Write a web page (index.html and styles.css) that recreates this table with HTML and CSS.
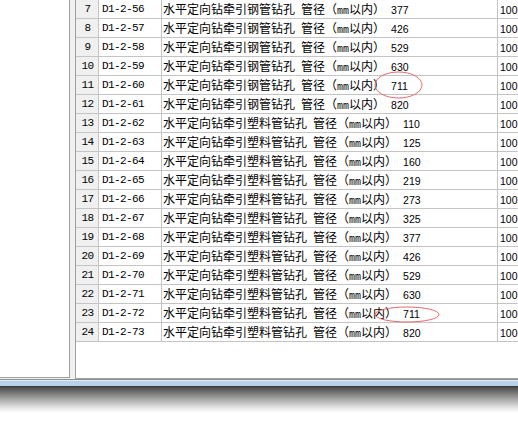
FILE: index.html
```html
<!DOCTYPE html>
<html lang="zh-CN">
<head>
<meta charset="utf-8">
<link rel="stylesheet" href="styles.css">
</head>
<body>
<div class="main">
  <div class="side"></div>
  <div class="gridpanel">
    <div class="grid">
      <div class="row"><div class="c num">7</div><div class="c code">D1-2-56</div><div class="c desc">水平定向钻牵引钢管钻孔<span class="a"> </span>管径（<span class="a">mm</span>以内）<span class="a"> </span><span class="n">377</span></div><div class="c last"><span class="n">100</span></div></div>
      <div class="row"><div class="c num">8</div><div class="c code">D1-2-57</div><div class="c desc">水平定向钻牵引钢管钻孔<span class="a"> </span>管径（<span class="a">mm</span>以内）<span class="a"> </span><span class="n">426</span></div><div class="c last"><span class="n">100</span></div></div>
      <div class="row"><div class="c num">9</div><div class="c code">D1-2-58</div><div class="c desc">水平定向钻牵引钢管钻孔<span class="a"> </span>管径（<span class="a">mm</span>以内）<span class="a"> </span><span class="n">529</span></div><div class="c last"><span class="n">100</span></div></div>
      <div class="row"><div class="c num">10</div><div class="c code">D1-2-59</div><div class="c desc">水平定向钻牵引钢管钻孔<span class="a"> </span>管径（<span class="a">mm</span>以内）<span class="a"> </span><span class="n">630</span></div><div class="c last"><span class="n">100</span></div></div>
      <div class="row"><div class="c num">11</div><div class="c code">D1-2-60</div><div class="c desc">水平定向钻牵引钢管钻孔<span class="a"> </span>管径（<span class="a">mm</span>以内）<span class="a"> </span><span class="n">711</span></div><div class="c last"><span class="n">100</span></div></div>
      <div class="row"><div class="c num">12</div><div class="c code">D1-2-61</div><div class="c desc">水平定向钻牵引钢管钻孔<span class="a"> </span>管径（<span class="a">mm</span>以内）<span class="a"> </span><span class="n">820</span></div><div class="c last"><span class="n">100</span></div></div>
      <div class="row"><div class="c num">13</div><div class="c code">D1-2-62</div><div class="c desc">水平定向钻牵引塑料管钻孔<span class="a"> </span>管径（<span class="a">mm</span>以内）<span class="a"> </span><span class="n">110</span></div><div class="c last"><span class="n">100</span></div></div>
      <div class="row"><div class="c num">14</div><div class="c code">D1-2-63</div><div class="c desc">水平定向钻牵引塑料管钻孔<span class="a"> </span>管径（<span class="a">mm</span>以内）<span class="a"> </span><span class="n">125</span></div><div class="c last"><span class="n">100</span></div></div>
      <div class="row"><div class="c num">15</div><div class="c code">D1-2-64</div><div class="c desc">水平定向钻牵引塑料管钻孔<span class="a"> </span>管径（<span class="a">mm</span>以内）<span class="a"> </span><span class="n">160</span></div><div class="c last"><span class="n">100</span></div></div>
      <div class="row"><div class="c num">16</div><div class="c code">D1-2-65</div><div class="c desc">水平定向钻牵引塑料管钻孔<span class="a"> </span>管径（<span class="a">mm</span>以内）<span class="a"> </span><span class="n">219</span></div><div class="c last"><span class="n">100</span></div></div>
      <div class="row"><div class="c num">17</div><div class="c code">D1-2-66</div><div class="c desc">水平定向钻牵引塑料管钻孔<span class="a"> </span>管径（<span class="a">mm</span>以内）<span class="a"> </span><span class="n">273</span></div><div class="c last"><span class="n">100</span></div></div>
      <div class="row"><div class="c num">18</div><div class="c code">D1-2-67</div><div class="c desc">水平定向钻牵引塑料管钻孔<span class="a"> </span>管径（<span class="a">mm</span>以内）<span class="a"> </span><span class="n">325</span></div><div class="c last"><span class="n">100</span></div></div>
      <div class="row"><div class="c num">19</div><div class="c code">D1-2-68</div><div class="c desc">水平定向钻牵引塑料管钻孔<span class="a"> </span>管径（<span class="a">mm</span>以内）<span class="a"> </span><span class="n">377</span></div><div class="c last"><span class="n">100</span></div></div>
      <div class="row"><div class="c num">20</div><div class="c code">D1-2-69</div><div class="c desc">水平定向钻牵引塑料管钻孔<span class="a"> </span>管径（<span class="a">mm</span>以内）<span class="a"> </span><span class="n">426</span></div><div class="c last"><span class="n">100</span></div></div>
      <div class="row"><div class="c num">21</div><div class="c code">D1-2-70</div><div class="c desc">水平定向钻牵引塑料管钻孔<span class="a"> </span>管径（<span class="a">mm</span>以内）<span class="a"> </span><span class="n">529</span></div><div class="c last"><span class="n">100</span></div></div>
      <div class="row"><div class="c num">22</div><div class="c code">D1-2-71</div><div class="c desc">水平定向钻牵引塑料管钻孔<span class="a"> </span>管径（<span class="a">mm</span>以内）<span class="a"> </span><span class="n">630</span></div><div class="c last"><span class="n">100</span></div></div>
      <div class="row"><div class="c num">23</div><div class="c code">D1-2-72</div><div class="c desc">水平定向钻牵引塑料管钻孔<span class="a"> </span>管径（<span class="a">mm</span>以内）<span class="a"> </span><span class="n">711</span></div><div class="c last"><span class="n">100</span></div></div>
      <div class="row"><div class="c num">24</div><div class="c code">D1-2-73</div><div class="c desc">水平定向钻牵引塑料管钻孔<span class="a"> </span>管径（<span class="a">mm</span>以内）<span class="a"> </span><span class="n">820</span></div><div class="c last"><span class="n">100</span></div></div>
    </div>
  </div>
</div>
<div class="bar"></div>
<div class="shadow"></div>
<svg class="marks" width="518" height="426" viewBox="0 0 518 426">
  <ellipse cx="398.5" cy="85" rx="23.5" ry="13" fill="none" stroke="#e46a6a" stroke-width="1"/>
  <ellipse cx="407" cy="314.5" rx="32" ry="7.5" fill="none" stroke="#e46a6a" stroke-width="1"/>
</svg>
</body>
</html>
```
FILE: styles.css
```css
html, body {
  margin: 0;
  padding: 0;
  width: 518px;
  height: 426px;
  overflow: hidden;
  background: #ffffff;
}
body {
  position: relative;
  font-family: "Noto Sans CJK SC", sans-serif;
}
.main {
  display: flex;
  height: 379px;
  background: #f0f0f0;
  border-bottom: 1px solid #8f8f8f;
}
.side {
  width: 69px;
  height: 377px;
  background: #ffffff;
  border-right: 1px solid #a0a0a0;
  border-bottom: 1px solid #a0a0a0;
  flex: none;
}
.gridpanel {
  margin-left: 5px;
  flex: 1 1 auto;
  min-width: 0;
  height: 378px;
  background: #ffffff;
  border-left: 1px solid #a0a0a0;
  border-bottom: 1px solid #a0a0a0;
  overflow: hidden;
}
.grid {
  display: flex;
  flex-direction: column;
}
.row {
  display: grid;
  grid-template-columns: 23px 63px 336px minmax(0, 1fr);
  height: 19px;
}
.c {
  border-right: 1px solid #c4c4c4;
  border-bottom: 1px solid #c4c4c4;
  height: 18px;
  line-height: 18px;
  font-size: 12px;
  color: #000;
  white-space: nowrap;
  overflow: hidden;
}
.num {
  background: #f0f0f0;
  text-align: center;
  font-family: "Liberation Mono", monospace;
  font-size: 11px;
  letter-spacing: -0.6px;
  padding-left: 1px;
}
.code {
  font-family: "Liberation Mono", monospace;
  font-size: 11px;
  letter-spacing: -0.6px;
  padding-left: 3px;
}
.desc {
  padding-left: 1px;
}
.last {
  padding-left: 2px;
  border-right: none;
}
.a {
  font-family: "Liberation Mono", monospace;
  font-size: 10px;
}
.n {
  font-family: "Liberation Sans", sans-serif;
  font-size: 10.5px;
}
.bar {
  height: 5px;
  background: #b9d1ea;
  border-top: 1px solid #e3ecf6;
  border-bottom: 1px solid #3a3a3a;
}
.shadow {
  height: 26px;
  background: linear-gradient(#4a4a4a, #9a9a9a 40%, #e6e6e6 80%, #ffffff);
}
.marks {
  position: absolute;
  left: 0;
  top: 0;
  pointer-events: none;
}
```
